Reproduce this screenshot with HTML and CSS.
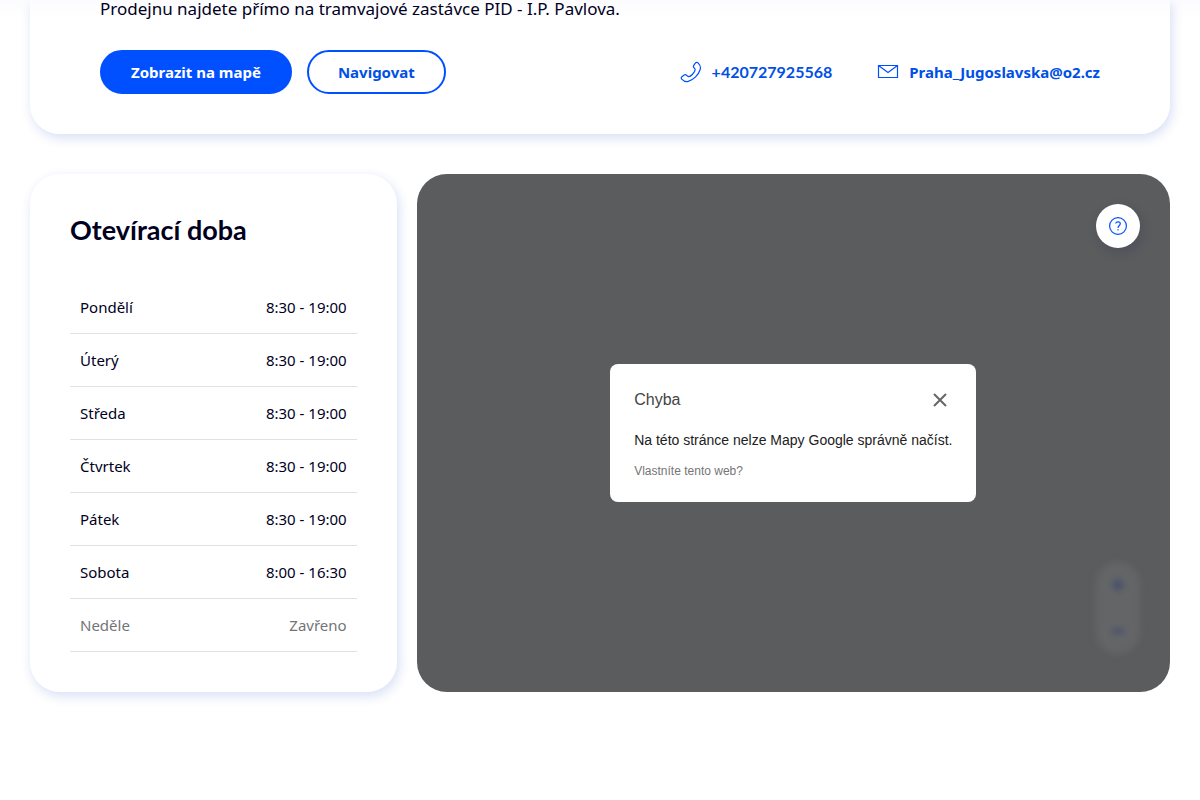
FILE: index.html
```html
<!DOCTYPE html>
<html lang="cs">
<head>
<meta charset="utf-8">
<meta name="viewport" content="width=device-width, initial-scale=1">
<title>Prodejna Praha Jugoslávská</title>
<link rel="stylesheet" href="styles.css">
</head>
<body>
<main class="page">
  <section class="card store">
    <p class="store-note">Prodejnu najdete přímo na tramvajové zastávce PID - I.P. Pavlova.</p>
    <div class="store-bar">
      <div class="actions">
        <a class="button button-primary" href="#mapa">Zobrazit na mapě</a>
        <a class="button button-outline" href="#navigace">Navigovat</a>
      </div>
      <div class="contacts">
        <a class="contact contact-phone" href="tel:+420727925568">
          <svg width="22" height="22" viewBox="0 0 22 22" aria-hidden="true"><path d="M13.600 4.600 15.300 2.100C16.200 1 17.400 1.200 18.300 2.200C20.300 4.300 20.900 6.300 20.100 8.700C18.500 13.900 13.600 18.900 8.200 20.400C5.700 21.100 3.700 20.200 1.700 18.100C1 17.300 1.100 16.400 1.900 15.800L4.200 14.100C5 13.500 5.800 13.600 6.600 14.300L7.400 15C9 16.200 10.700 15.200 12.300 13.500C14.300 11.500 16 9.200 14.700 7.500L13.900 6.600C13.300 5.900 13.200 5.200 13.600 4.600Z"/></svg>
          <span>+420727925568</span>
        </a>
        <a class="contact" href="mailto:Praha_Jugoslavska@o2.cz">
          <svg width="22" height="22" viewBox="0 0 22 22" aria-hidden="true"><path d="M1.500 4.500h19v12h-19ZM1.500 4.500 11 11.500 20.500 4.500"/></svg>
          <span>Praha_Jugoslavska@o2.cz</span>
        </a>
      </div>
    </div>
  </section>

  <div class="details">
    <section class="card hours">
      <h2 class="hours-title">Otevírací doba</h2>
      <table class="hours-table">
        <tbody>
          <tr><th scope="row">Pondělí</th><td>8:30 - 19:00</td></tr>
          <tr><th scope="row">Úterý</th><td>8:30 - 19:00</td></tr>
          <tr><th scope="row">Středa</th><td>8:30 - 19:00</td></tr>
          <tr><th scope="row">Čtvrtek</th><td>8:30 - 19:00</td></tr>
          <tr><th scope="row">Pátek</th><td>8:30 - 19:00</td></tr>
          <tr><th scope="row">Sobota</th><td>8:00 - 16:30</td></tr>
          <tr class="closed"><th scope="row">Neděle</th><td>Zavřeno</td></tr>
        </tbody>
      </table>
    </section>

    <section class="map" id="mapa" aria-label="Mapa">
      <div class="dialog" role="dialog" aria-labelledby="dialog-title">
        <div class="dialog-head">
          <h3 class="dialog-title" id="dialog-title">Chyba</h3>
          <button class="dialog-close" type="button" aria-label="Zavřít">
            <svg width="14" height="14" viewBox="0 0 14 14" aria-hidden="true"><path d="M1 1 13 13M13 1 1 13"/></svg>
          </button>
        </div>
        <p class="dialog-text">Na této stránce nelze Mapy Google správně načíst.</p>
        <a class="dialog-link" href="#web">Vlastníte tento web?</a>
      </div>
      <button class="help" type="button" aria-label="Nápověda">
        <svg width="20" height="20" viewBox="0 0 20 20" aria-hidden="true"><circle cx="10" cy="10" r="8.400"/><path d="M7.700 7.500C8 5.200 12.300 5.200 12.300 7.700 12.300 9.500 10 9.500 10 12"/><path d="M10 13.300v1.200"/></svg>
      </button>
      <div class="zoom">
        <button class="zoom-button" type="button" aria-label="Přiblížit"><svg width="16" height="16" viewBox="0 0 16 16" aria-hidden="true"><path d="M8 2v12M2 8h12"/></svg></button>
        <button class="zoom-button" type="button" aria-label="Oddálit"><svg width="16" height="16" viewBox="0 0 16 16" aria-hidden="true"><path d="M2 8h12"/></svg></button>
      </div>
    </section>
  </div>
</main>
</body>
</html>
```
FILE: styles.css
```css
* { box-sizing: border-box; }

body {
  margin: 0;
  background: #fff;
  color: #00001e;
  font-family: "Noto Sans", "Open Sans", sans-serif;
  font-size: 15px;
}

p, h2, h3 { margin: 0; }
a { text-decoration: none; }
button { padding: 0; border: 0; cursor: pointer; }

.page {
  padding: 0 30px 40px;
  background: linear-gradient(#fcfcff, #fff 20px);
}

.card {
  border-radius: 30px;
  background: #fff;
  box-shadow: 2px 4px 12px rgba(0, 58, 190, 0.16);
}

.store {
  padding: 0 70px 40px;
  border-top-left-radius: 0;
  border-top-right-radius: 0;
  background: linear-gradient(#fcfcff, #fff 20px);
}

.store-note {
  font-size: 17px;
  line-height: 18px;
}

.store-bar {
  display: flex;
  flex-wrap: wrap;
  align-items: center;
  justify-content: space-between;
  gap: 20px;
  margin-top: 32px;
}

.actions { display: flex; gap: 15px; }

.button {
  padding: 0 29px;
  border: 2px solid #0050ff;
  border-radius: 22px;
  font-weight: 700;
  line-height: 40px;
}

.button-primary { background: #0050ff; color: #fff; }
.button-outline { background: #fff; color: #0050e6; }

.contacts { display: flex; flex-wrap: wrap; gap: 45px; }

.contact {
  display: flex;
  align-items: center;
  gap: 10px;
  color: #0050e6;
  font-weight: 700;
  line-height: 22px;
}

.contact-phone {
  font-family: Lato, "Noto Sans", sans-serif;
  font-size: 16px;
}

.contact svg { fill: none; stroke: #0050ff; stroke-width: 1.2; }

.details {
  display: flex;
  gap: 20px;
  margin-top: 40px;
}

.hours {
  flex: 0 0 calc((100% + 20px) / 3 - 20px);
  padding: 40px;
}

.hours-title {
  margin-bottom: 35px;
  font-family: Lato, "Noto Sans", sans-serif;
  font-size: 27px;
  font-weight: 700;
  line-height: 32px;
}

.hours-table {
  width: 100%;
  border-collapse: separate;
  border-spacing: 0;
  line-height: 20px;
}

.hours-table th,
.hours-table td {
  padding: 16px 10px;
  border-bottom: 1px solid #e1e1e3;
  font-weight: 400;
  text-align: left;
}

.hours-table td { text-align: right; }
.closed { color: #747478; }

.map {
  position: relative;
  flex: 1;
  display: flex;
  align-items: center;
  justify-content: center;
  border-radius: 30px;
  background: #5b5c5e;
  overflow: hidden;
}

.dialog {
  padding: 24px;
  border-radius: 8px;
  background: #fff;
  font-family: "Liberation Sans", Arial, sans-serif;
}

.dialog-head {
  display: flex;
  align-items: center;
  justify-content: space-between;
}

.dialog-title {
  color: #444;
  font-size: 16px;
  font-weight: 400;
  line-height: 24px;
}

.dialog-close {
  display: grid;
  place-items: center;
  width: 24px;
  height: 24px;
  background: none;
}

.dialog-close svg { fill: none; stroke: #666; stroke-width: 2; }

.dialog-text {
  margin: 18px 0 14px;
  color: #212121;
  font-size: 14px;
  line-height: 20px;
}

.dialog-link {
  display: block;
  color: #757575;
  font-size: 12px;
  line-height: 14px;
}

.help {
  position: absolute;
  top: 30px;
  right: 30px;
  display: grid;
  place-items: center;
  width: 44px;
  height: 44px;
  border-radius: 50%;
  background: #fff;
  box-shadow: 2px 4px 12px rgba(0, 20, 80, 0.16);
}

.help svg { fill: none; stroke: #0050ff; stroke-width: 1.2; }

.zoom {
  position: absolute;
  right: 30px;
  bottom: 38px;
  display: grid;
  border-radius: 22px;
  background: #636567;
  filter: blur(3px);
}

.zoom-button {
  display: grid;
  place-items: center;
  width: 44px;
  height: 46px;
  background: none;
}

.zoom-button svg { fill: none; stroke: #434c6c; stroke-width: 4; }
```
